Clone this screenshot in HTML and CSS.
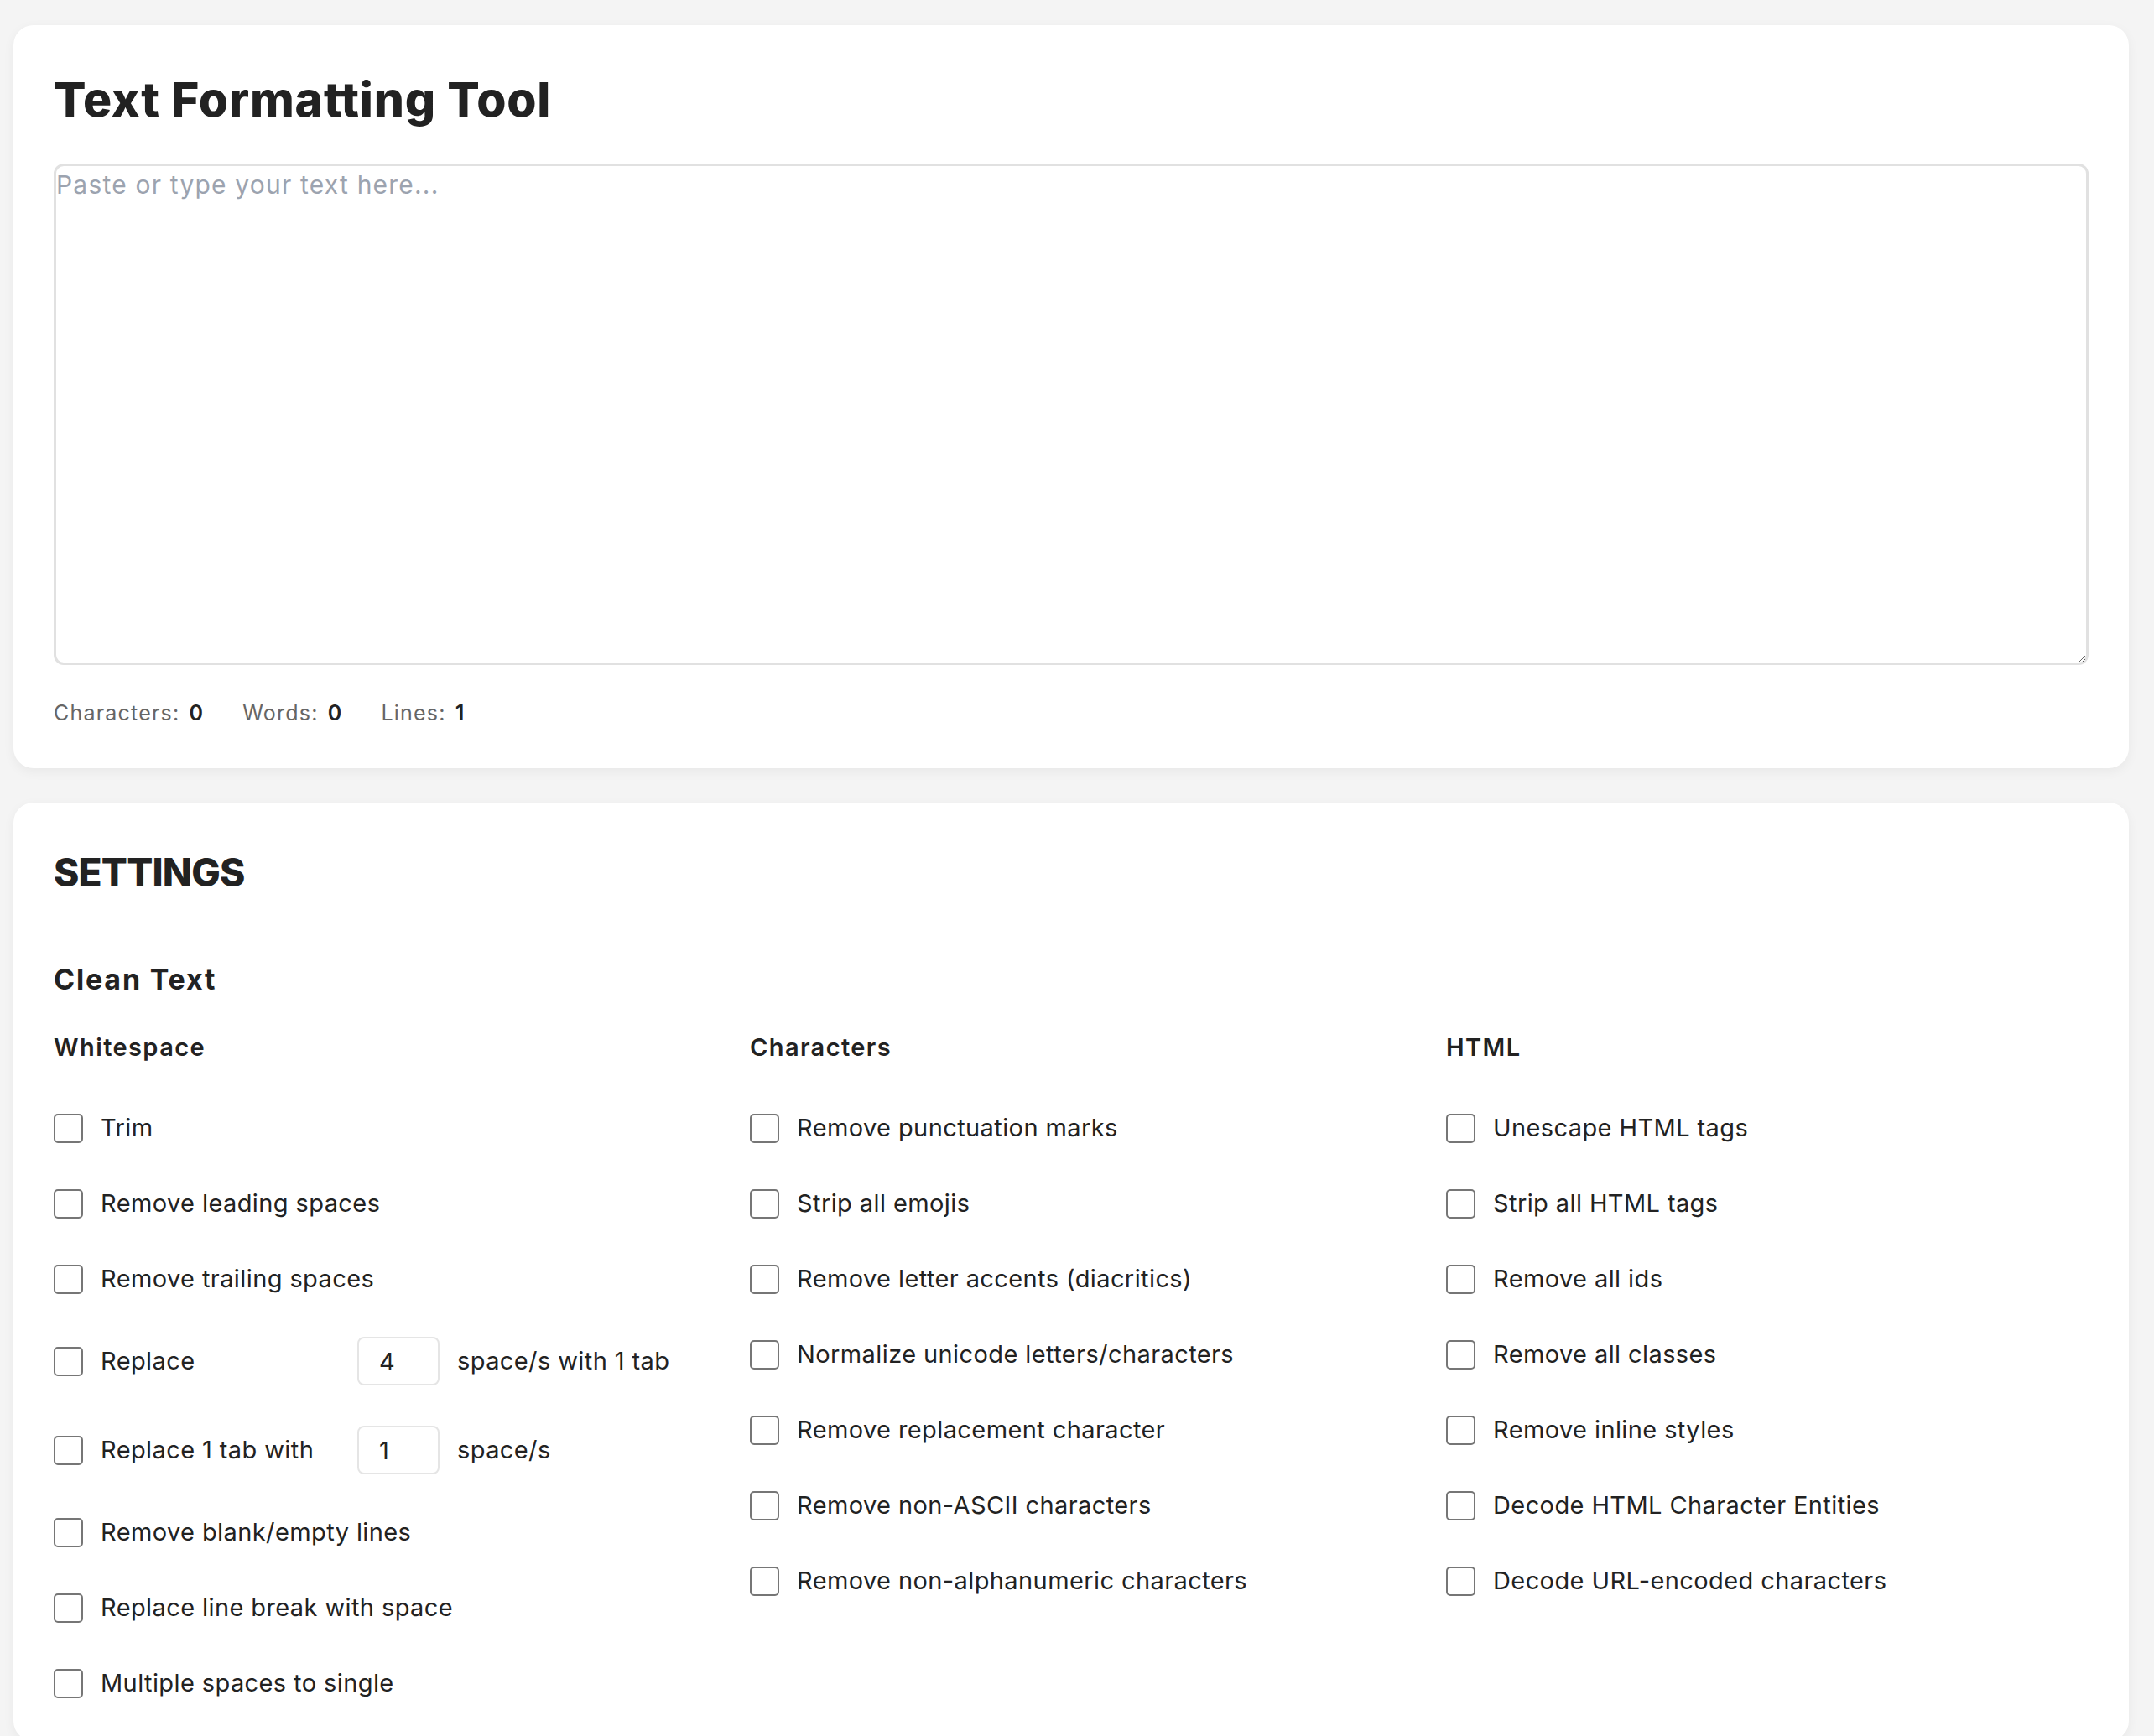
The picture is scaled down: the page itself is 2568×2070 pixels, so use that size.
FILE: index.html
```html
<!doctype html>
<html>
<head>
	<title>Text Formatting Tool</title>
	<meta charset="utf-8">
	<link rel="stylesheet" href="styles.css">
	<script>
		function $(id) {
			return document.getElementById(id);
		}

		function count() {
			// Update the counters under the textarea.
			let s = $('input').value;
			$('chars').innerHTML = s.length;
			$('words').innerHTML = s.trim() ? s.trim().split(/\s+/).length : 0;
			$('lines').innerHTML = s.split('\n').length;
		}
	</script>
</head>

<body>

	<div class="card">
		<h1>Text Formatting Tool</h1>
		<textarea id="input" placeholder="Paste or type your text here..." oninput="count();"></textarea>
		<div class="stats">
			<span>Characters: <b id="chars">0</b></span>
			<span>Words: <b id="words">0</b></span>
			<span>Lines: <b id="lines">1</b></span>
		</div>
	</div>

	<div class="card">
		<h2>SETTINGS</h2>
		<h3>Clean Text</h3>

		<div class="groups">
			<div class="group">
				<h4>Whitespace</h4>
				<div class="list">
					<label class="opt"><input type="checkbox"><span>Trim</span></label>
					<label class="opt"><input type="checkbox"><span>Remove leading spaces</span></label>
					<label class="opt"><input type="checkbox"><span>Remove trailing spaces</span></label>
					<div class="opt">
						<input type="checkbox">
						<span class="lead">Replace</span>
						<input type="number" class="num" value="4">
						<span>space/s with 1 tab</span>
					</div>
					<div class="opt">
						<input type="checkbox">
						<span class="lead">Replace 1 tab with</span>
						<input type="number" class="num" value="1">
						<span>space/s</span>
					</div>
					<label class="opt"><input type="checkbox"><span>Remove blank/empty lines</span></label>
					<label class="opt"><input type="checkbox"><span>Replace line break with space</span></label>
					<label class="opt"><input type="checkbox"><span>Multiple spaces to single</span></label>
				</div>
			</div>

			<div class="group">
				<h4>Characters</h4>
				<div class="list">
					<label class="opt"><input type="checkbox"><span>Remove punctuation marks</span></label>
					<label class="opt"><input type="checkbox"><span>Strip all emojis</span></label>
					<label class="opt"><input type="checkbox"><span>Remove letter accents (diacritics)</span></label>
					<label class="opt"><input type="checkbox"><span>Normalize unicode letters/characters</span></label>
					<label class="opt"><input type="checkbox"><span>Remove replacement character</span></label>
					<label class="opt"><input type="checkbox"><span>Remove non-ASCII characters</span></label>
					<label class="opt"><input type="checkbox"><span>Remove non-alphanumeric characters</span></label>
				</div>
			</div>

			<div class="group">
				<h4>HTML</h4>
				<div class="list">
					<label class="opt"><input type="checkbox"><span>Unescape HTML tags</span></label>
					<label class="opt"><input type="checkbox"><span>Strip all HTML tags</span></label>
					<label class="opt"><input type="checkbox"><span>Remove all ids</span></label>
					<label class="opt"><input type="checkbox"><span>Remove all classes</span></label>
					<label class="opt"><input type="checkbox"><span>Remove inline styles</span></label>
					<label class="opt"><input type="checkbox"><span>Decode HTML Character Entities</span></label>
					<label class="opt"><input type="checkbox"><span>Decode URL-encoded characters</span></label>
				</div>
			</div>
		</div>
	</div>

</body>
</html>
```

FILE: styles.css
```css
* {
	box-sizing: border-box;
}
body {
	margin: 0;
	padding: 30px 30px 0 16px;
	color: #222;
	background: #f4f4f4;
	font-family: Inter, "Open Sans", sans-serif;
}
.card {
	margin-bottom: 41px;
	padding: 48px;
	border-radius: 24px;
	background: #fff;
	box-shadow: 0 4px 14px rgba(0,0,0,0.05);
}
h1 {
	margin: 7px 0 42px;
	font-size: 57px;
	line-height: 68px;
	font-weight: 800;
	letter-spacing: 0.8px;
}
textarea {
	display: block;
	width: 100%;
	height: 598px;
	padding: 0;
	border: 3px solid #e1e1e1;
	border-radius: 12px;
	color: #222;
	font: 30px/1.5 Inter, sans-serif;
	letter-spacing: 1.2px;
	outline: none;
	resize: vertical;
}
textarea::placeholder {
	color: #9ca3af;
}
.stats {
	display: flex;
	gap: 46px;
	margin-top: 39px;
	color: #666;
	font-size: 25px;
	line-height: 36px;
	letter-spacing: 1.2px;
}
.stats b {
	margin-left: 3px;
	color: #222;
	font-weight: 600;
}

/* settings */
h2 {
	margin: 7px 0 0;
	font-size: 46px;
	line-height: 56px;
	font-weight: 800;
	letter-spacing: -0.8px;
}
h3 {
	margin: 80px 0 0;
	font-size: 34px;
	line-height: 40px;
	font-weight: 700;
	letter-spacing: 1.8px;
}
.groups {
	display: grid;
	grid-template-columns: repeat(3, 1fr);
	column-gap: 64px;
	margin-top: 41px;
}
h4 {
	margin: 0 0 55px;
	font-size: 29px;
	line-height: 40px;
	font-weight: 600;
	letter-spacing: 1.4px;
}
.list {
	display: flex;
	flex-direction: column;
	gap: 48px;
}
.opt {
	display: flex;
	align-items: center;
	gap: 21px;
	min-height: 42px;
	font-size: 29px;
	line-height: 42px;
	letter-spacing: 0.4px;
}
.opt input[type="checkbox"] {
	flex: none;
	width: 35px;
	height: 35px;
	margin: 0;
	border: 2px solid #767676;
	border-radius: 5px;
	background: #fff;
	appearance: none;
}
.opt .lead {
	width: 285px;
}
.num {
	width: 98px;
	height: 58px;
	padding: 0 24px;
	border: 2px solid #e5e5e5;
	border-radius: 8px;
	color: #222;
	font: inherit;
	outline: none;
	appearance: textfield;
}
.num::-webkit-inner-spin-button {
	display: none;
}
```
